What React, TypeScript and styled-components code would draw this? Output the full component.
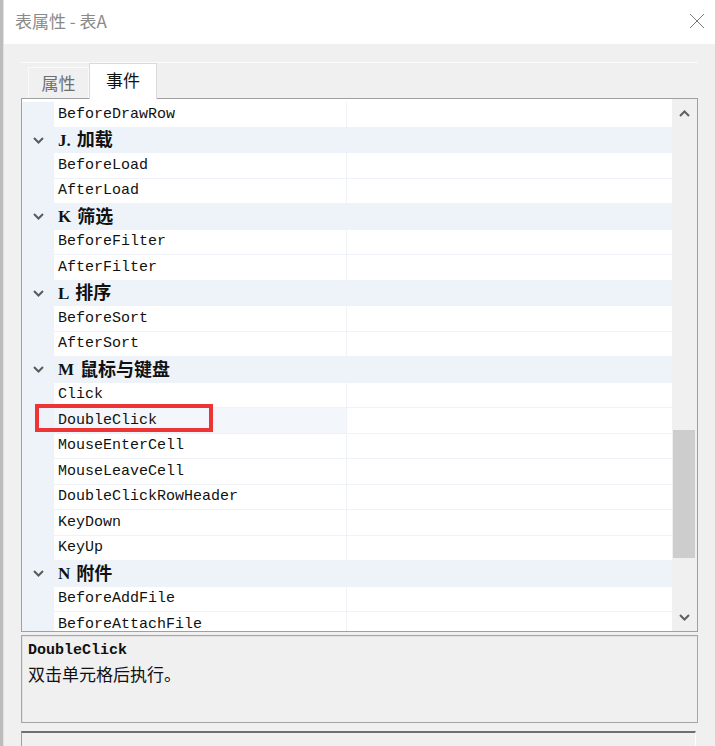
import React, { FC } from 'react';
import styled, { createGlobalStyle } from 'styled-components';

const GlobalStyle = createGlobalStyle`
    html, body {
        margin: 0;
        padding: 0;
        background: #f0f0f0;
        font-family: 'Noto Sans CJK SC', 'Liberation Sans', sans-serif;
    }
`;

const ROW_H = 25.5;

const Page = styled.div`
    display: flex;
    width: 715px;
    height: 746px;
    overflow: hidden;
`;

const Edge = styled.div`
    width: 3px;
    flex: none;
    background: #bcbcbc;
    border-right: 1px solid #e2e2e2;
`;

const Window = styled.div`
    flex: 1;
    display: flex;
    flex-direction: column;
    background: #f0f0f0;
    overflow: hidden;
`;

const TitleBar = styled.div`
    flex: none;
    height: 44px;
    background: #ffffff;
    display: flex;
    align-items: center;
    justify-content: space-between;
    padding: 0 10px 0 11px;
`;

const Title = styled.span`
    font-size: 17px;
    color: #8a8a8a;
    line-height: 1;
    margin-top: -4px;
`;

const CloseButton = styled.svg`
    width: 16px;
    height: 16px;
    margin-top: -3px;
`;

const Body = styled.div`
    flex: none;
    padding: 18px 17px 0 17px;
    display: flex;
    flex-direction: column;
    & > * {
        flex: none;
    }
`;

const TabStrip = styled.div`
    height: 36px;
    border-top: 1px solid #fbfbfb;
    display: flex;
    align-items: flex-end;
    padding-left: 7px;
    box-sizing: border-box;
`;

const Tab = styled.div<{ $active?: boolean }>`
    height: ${(p) => (p.$active ? 36 : 31)}px;
    width: ${(p) => (p.$active ? 68 : 61)}px;
    box-sizing: border-box;
    display: flex;
    align-items: center;
    justify-content: center;
    font-size: 17px;
    color: ${(p) => (p.$active ? '#111' : '#6e6e6e')};
    background: ${(p) => (p.$active ? '#ffffff' : '#f0f0f0')};
    border: 1px solid ${(p) => (p.$active ? '#dadada' : '#fafafa')};
    border-bottom: none;
    padding-bottom: ${(p) => (p.$active ? 4 : 2)}px;
    margin-bottom: ${(p) => (p.$active ? -1 : 0)}px;
    position: relative;
`;

const Grid = styled.div`
    height: 534px;
    box-sizing: border-box;
    border: 1px solid #a0a0a0;
    display: flex;
    background: #ffffff;
`;

const Rows = styled.div`
    flex: 1;
    overflow: hidden;
    padding-top: 3px;
`;

const Row = styled.div`
    height: ${ROW_H}px;
    display: flex;
    position: relative;
`;

const Margin = styled.div`
    width: 32px;
    flex: none;
    background: #eef3fa;
    display: flex;
    align-items: center;
    justify-content: center;
`;

const NameCell = styled.div<{ $selected?: boolean }>`
    width: 293px;
    flex: none;
    box-sizing: border-box;
    padding-left: 4px;
    border-bottom: 1px solid #eff3f9;
    border-right: 1px solid #eff2f7;
    background: ${(p) => (p.$selected ? '#f3f6fb' : '#ffffff')};
    font-family: 'Liberation Mono', monospace;
    font-size: 15px;
    color: #111;
    display: flex;
    align-items: center;
    white-space: nowrap;
`;

const ValueCell = styled.div`
    flex: 1;
    border-bottom: 1px solid #eff3f9;
`;

const CategoryRow = styled(Row)`
    background: #eef3fa;
`;

const CategoryLabel = styled.div`
    padding-left: 4px;
    display: flex;
    align-items: center;
    font-family: 'Liberation Serif', 'Noto Sans CJK SC', serif;
    font-weight: bold;
    font-size: 18px;
    color: #111;
    line-height: 1;
    white-space: nowrap;
`;

const Letter = styled.span`
    font-size: 17px;
    margin-right: 6px;
`;

const Highlight = styled.div`
    position: absolute;
    left: 13px;
    top: -4px;
    width: 178px;
    height: 28px;
    box-sizing: border-box;
    border: 4px solid #ee3535;
    pointer-events: none;
`;

const ScrollBar = styled.div`
    width: 25px;
    flex: none;
    background: #f0f0f0;
    display: flex;
    flex-direction: column;
    align-items: center;
`;

const ArrowBox = styled.div`
    height: 28px;
    width: 100%;
    flex: none;
    display: flex;
    align-items: center;
    justify-content: center;
`;

const Track = styled.div`
    flex: 1;
    width: 100%;
    display: flex;
    flex-direction: column;
    padding: 0 2px 0 1px;
    box-sizing: border-box;
`;

const Thumb = styled.div`
    margin-top: 303px;
    height: 128px;
    background: #cdcdcd;
`;

const Description = styled.div`
    margin-top: 3px;
    height: 88px;
    box-sizing: border-box;
    border: 1px solid #a6a6a6;
    box-shadow: inset 1px 1px 0 #e3e3e3;
    padding: 4px 6px;
`;

const DescTitle = styled.div`
    font-family: 'Liberation Mono', monospace;
    font-weight: bold;
    font-size: 15px;
    color: #111;
    line-height: 22px;
`;

const DescText = styled.div`
    font-size: 17px;
    color: #111;
    line-height: 23px;
`;

const BottomBox = styled.div`
    margin-top: 8px;
    margin-right: 2px;
    height: 30px;
    border-top: 2px solid #707070;
    border-left: 1px solid #a0a0a0;
    border-right: 1px solid #ffffff;
`;

const Chevron: FC<{ up?: boolean; color?: string }> = ({ up, color = '#5a5a5a' }) => (
    <svg width="11" height="7" viewBox="0 0 11 7">
        <polyline
            points={up ? '1,6 5.5,1.5 10,6' : '1,1 5.5,5.5 10,1'}
            fill="none"
            stroke={color}
            strokeWidth="2"
        />
    </svg>
);

type Item = { cat?: [string, string]; name?: string };

const items: Item[] = [
    { name: 'BeforeDrawRow' },
    { cat: ['J.', '加载'] },
    { name: 'BeforeLoad' },
    { name: 'AfterLoad' },
    { cat: ['K', '筛选'] },
    { name: 'BeforeFilter' },
    { name: 'AfterFilter' },
    { cat: ['L', '排序'] },
    { name: 'BeforeSort' },
    { name: 'AfterSort' },
    { cat: ['M', '鼠标与键盘'] },
    { name: 'Click' },
    { name: 'DoubleClick' },
    { name: 'MouseEnterCell' },
    { name: 'MouseLeaveCell' },
    { name: 'DoubleClickRowHeader' },
    { name: 'KeyDown' },
    { name: 'KeyUp' },
    { cat: ['N', '附件'] },
    { name: 'BeforeAddFile' },
    { name: 'BeforeAttachFile' },
];

const selected = 'DoubleClick';

export default function App() {
    return (
        <Page>
            <GlobalStyle />
            <Edge />
            <Window>
                <TitleBar>
                    <Title>表属性 - 表A</Title>
                    <CloseButton viewBox="0 0 16 16">
                        <path d="M1 1 L15 15 M15 1 L1 15" stroke="#7a7a7a" strokeWidth="1" fill="none" />
                    </CloseButton>
                </TitleBar>
                <Body>
                    <TabStrip>
                        <Tab>属性</Tab>
                        <Tab $active>事件</Tab>
                    </TabStrip>
                    <Grid>
                        <Rows>
                            {items.map((item, i) =>
                                item.cat ? (
                                    <CategoryRow key={i}>
                                        <Margin>
                                            <Chevron />
                                        </Margin>
                                        <CategoryLabel>
                                            <Letter>{item.cat[0]}</Letter>
                                            {item.cat[1]}
                                        </CategoryLabel>
                                    </CategoryRow>
                                ) : (
                                    <Row key={i}>
                                        <Margin />
                                        <NameCell $selected={item.name === selected}>{item.name}</NameCell>
                                        <ValueCell />
                                        {item.name === selected && <Highlight />}
                                    </Row>
                                ),
                            )}
                        </Rows>
                        <ScrollBar>
                            <ArrowBox>
                                <Chevron up color="#606060" />
                            </ArrowBox>
                            <Track>
                                <Thumb />
                            </Track>
                            <ArrowBox>
                                <Chevron color="#606060" />
                            </ArrowBox>
                        </ScrollBar>
                    </Grid>
                    <Description>
                        <DescTitle>DoubleClick</DescTitle>
                        <DescText>双击单元格后执行。</DescText>
                    </Description>
                    <BottomBox />
                </Body>
            </Window>
        </Page>
    );
}
